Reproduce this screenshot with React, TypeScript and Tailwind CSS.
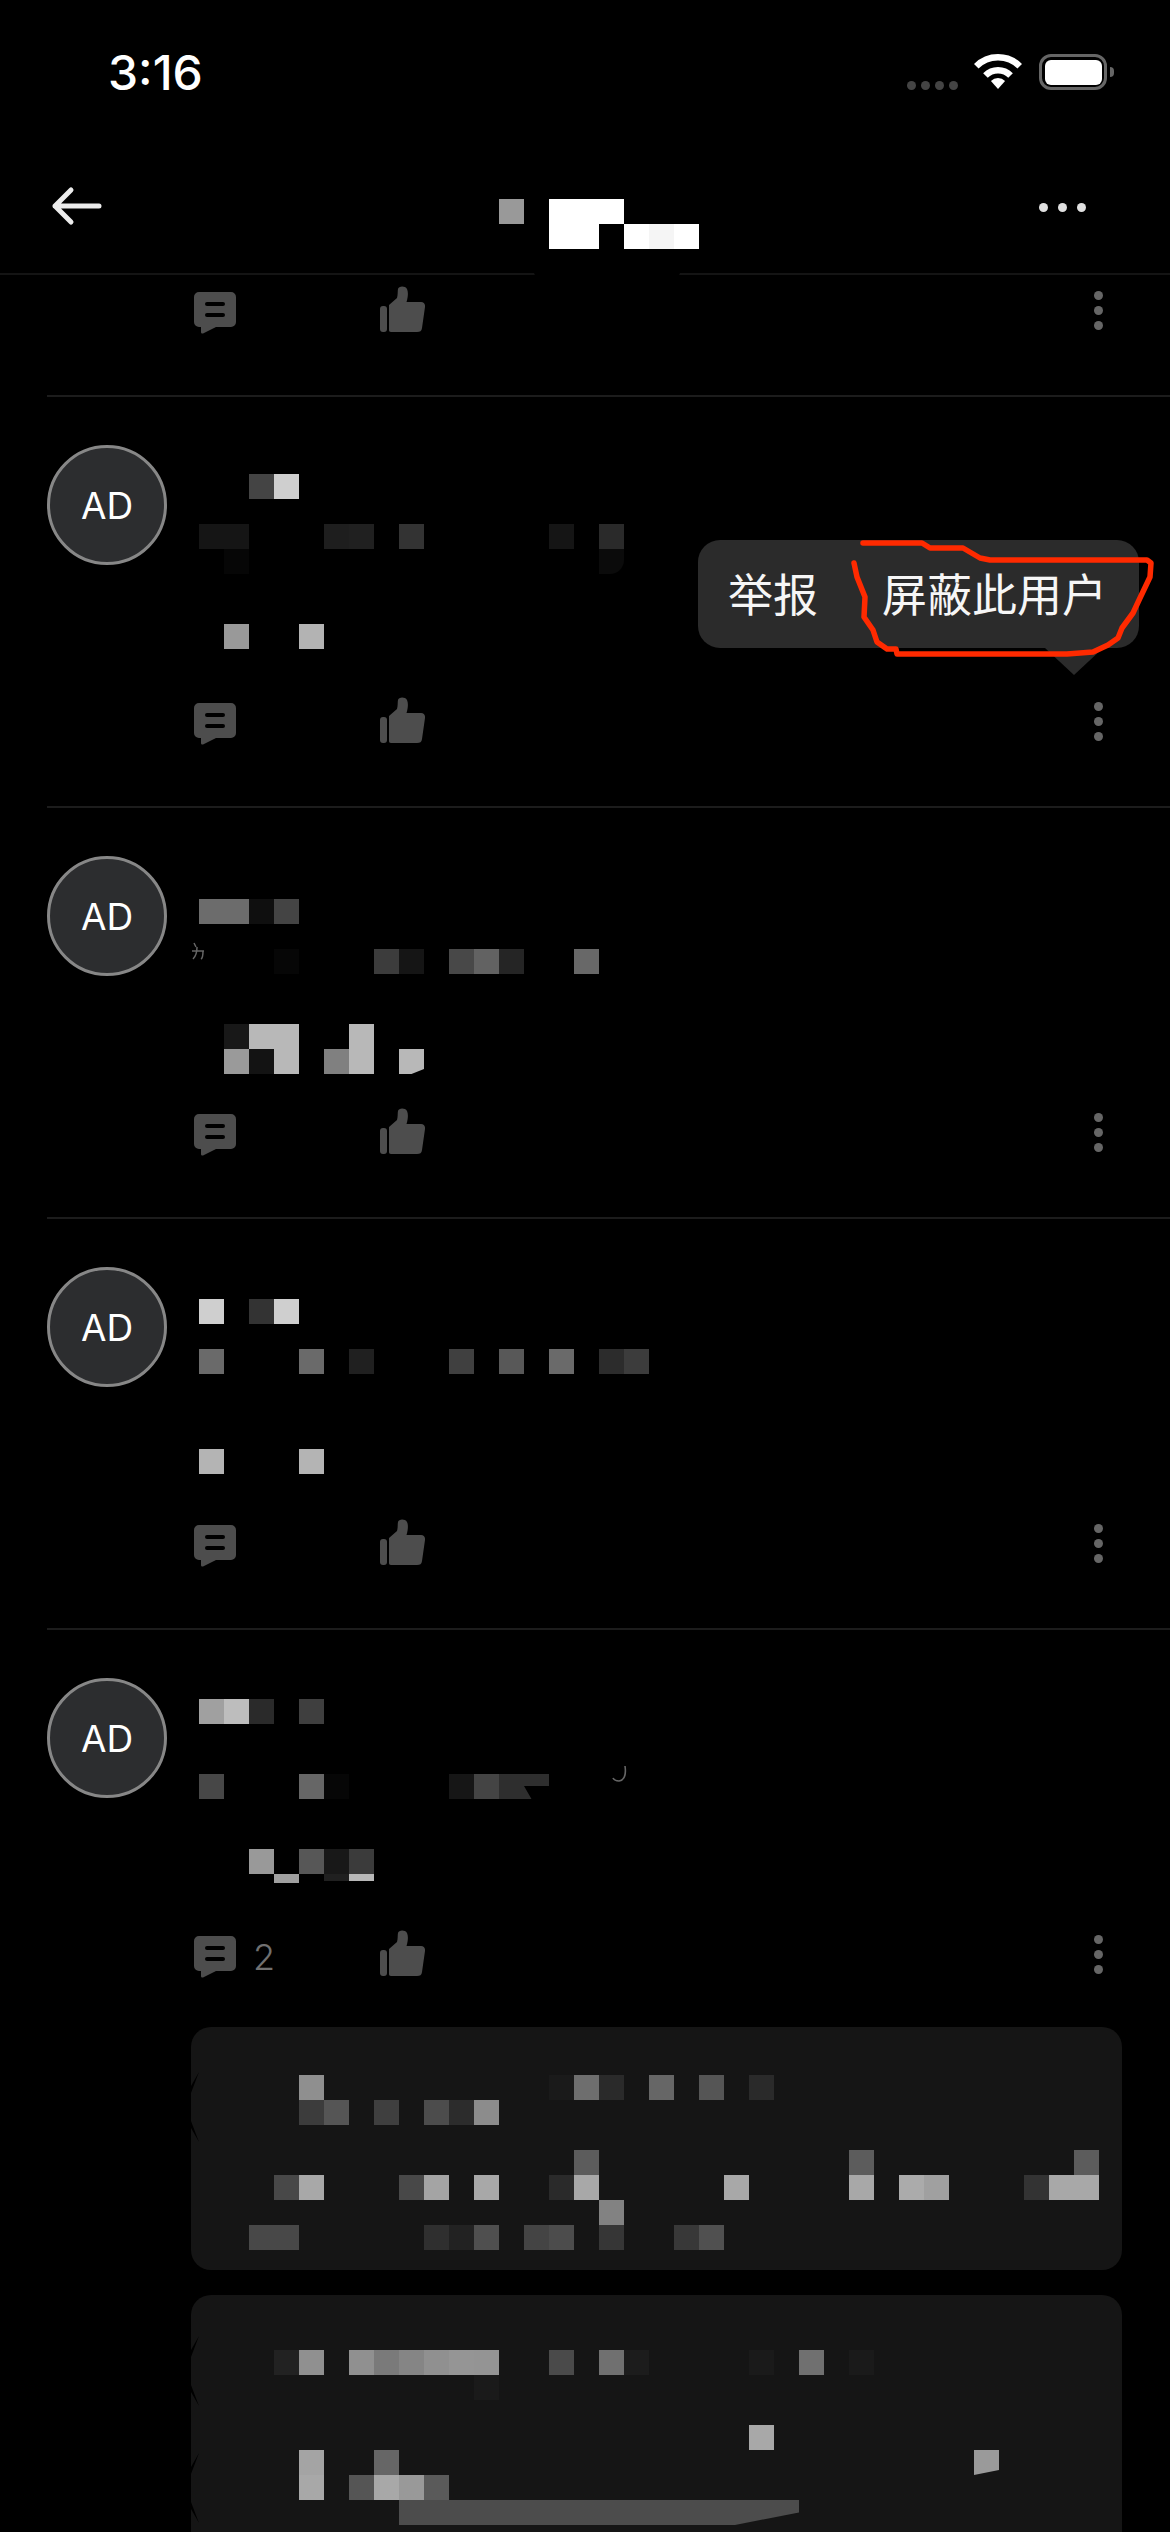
import React from "react";

type Cell = { i: number; c: string; span?: number; cls?: string };
type Row = Cell[];

const cell = (i: number, c: string, span = 1, cls = ""): Cell => ({ i, c, span, cls });

function Mosaic({ rows }: { rows: Row[] }) {
  return (
    <div className="flex flex-col">
      {rows.map((row, r) => (
        <div key={r} className="grid h-[25px] grid-cols-[repeat(37,25px)]">
          {row.map((m) => (
            <div
              key={m.i}
              className={m.cls || "h-[25px]"}
              style={{ backgroundColor: m.c, gridColumn: `${m.i + 1} / span ${m.span}` }}
            />
          ))}
        </div>
      ))}
    </div>
  );
}

function CommentIcon() {
  return (
    <svg viewBox="0 0 42 42" className="h-[42px] w-[42px] shrink-0">
      <path
        d="M5 0h32a5 5 0 0 1 5 5v25a5 5 0 0 1-5 5H22l-13 6.5c-1 .3-2-.3-2-1.5V35H5a5 5 0 0 1-5-5V5a5 5 0 0 1 5-5z"
        fill="#4d4d4d"
      />
      <rect x="11" y="10" width="20" height="4" rx="2" fill="#000" />
      <rect x="11" y="21" width="20" height="4" rx="2" fill="#000" />
    </svg>
  );
}

function ThumbIcon() {
  return (
    <svg viewBox="0 0 45 46" className="h-[46px] w-[45px] shrink-0">
      <rect x="0" y="20" width="7" height="26" rx="3" fill="#4d4d4d" />
      <path
        d="M9 19L17 12C18 9 17.5 5 18 3C18.5 0 25-.5 27 3C28.5 6 28 11 26.5 16H41C44 16 45.3 18 45 21L42 42C41.6 45 40 46 37 46H11C9.5 46 9 45 9 44Z"
        fill="#4d4d4d"
      />
    </svg>
  );
}

function Actions({ count }: { count?: number }) {
  return (
    <div className="flex h-[50px] items-start pl-[194px] pr-[67px]">
      <div className="flex w-[186px] items-center pt-[6px]">
        <CommentIcon />
        {count ? (
          <span className="ml-[17px] font-['Inter',sans-serif] text-[36px] font-light leading-[38px] text-[#707070]">
            {count}
          </span>
        ) : null}
      </div>
      <ThumbIcon />
      <div className="ml-auto flex flex-col gap-[6px] pt-[5px]">
        <span className="h-[9px] w-[9px] rounded-full bg-[#666]" />
        <span className="h-[9px] w-[9px] rounded-full bg-[#666]" />
        <span className="h-[9px] w-[9px] rounded-full bg-[#666]" />
      </div>
    </div>
  );
}

function Avatar() {
  return (
    <div className="mt-[48px] flex h-[120px] w-[120px] shrink-0 items-center justify-center rounded-full border-[3px] border-[#878787] bg-[#2c2d2f] pt-[2px] font-['Inter',sans-serif] text-[37px] font-normal text-white">
      AD
    </div>
  );
}

function Post({
  rows,
  pad,
  count,
  last,
  extra,
}: {
  rows: Row[];
  pad: string;
  count?: number;
  last?: boolean;
  extra?: React.ReactNode;
}) {
  return (
    <div className={last ? "" : "h-[411px]"}>
      <div className="ml-[47px] h-[2px] bg-[#1c1c1c]" />
      <div className="relative flex h-[300px] pl-[47px]">
        <Avatar />
        <div className={`ml-[32px] ${pad}`}>
          <Mosaic rows={rows} />
        </div>
        {extra}
      </div>
      <Actions count={count} />
    </div>
  );
}

// leftover edge of a masked avatar, sits on the card's left side
function CardNotch({ top }: { top: string }) {
  return (
    <svg viewBox="0 0 8 70" className={`absolute left-0 h-[70px] w-[8px] ${top}`}>
      <path d="M8 0L0 14V21ZM0 49V56L8 70Z" fill="#000" />
    </svg>
  );
}

function ReplyCard({ rows, pad, h, notches }: { rows: Row[]; pad: string; h: string; notches: string[] }) {
  return (
    <div className={`relative overflow-hidden rounded-[20px] bg-[#151515] pl-[8px] ${pad} ${h}`}>
      <Mosaic rows={rows} />
      {notches.map((n) => (
        <CardNotch key={n} top={n} />
      ))}
    </div>
  );
}

const post1: Row[] = [
  [cell(2, "#444444"), cell(3, "#cfcfcf")],
  [],
  [cell(0, "#151515", 2), cell(5, "#1e1e1e"), cell(6, "#202020"), cell(8, "#333333"), cell(14, "#151515"), cell(16, "#2a2a2a")],
  [cell(1, "#060606"), cell(16, "#0b0b0b", 1, "h-[25px] rounded-br-[14px]")],
  [],
  [],
  [cell(1, "#999999"), cell(4, "#b3b3b3")],
];

const post2: Row[] = [
  [cell(0, "#6c6c6c", 2), cell(2, "#0f0f0f"), cell(3, "#444444")],
  [],
  [cell(3, "#060606"), cell(7, "#3c3c3c"), cell(8, "#151515"), cell(10, "#484848"), cell(11, "#626262"), cell(12, "#252525"), cell(15, "#686868")],
  [],
  [],
  [cell(1, "#181818"), cell(2, "#b8b8b8", 2), cell(6, "#b8b8b8")],
  [
    cell(1, "#9a9a9a"),
    cell(2, "#131313"),
    cell(3, "#b8b8b8"),
    cell(5, "#808080"),
    cell(6, "#b8b8b8"),
    cell(8, "#b8b8b8", 1, "h-[25px] [clip-path:polygon(0_0,100%_0,100%_80%,50%_100%,0_100%)]"),
  ],
];

const post3: Row[] = [
  [cell(0, "#cfcfcf"), cell(2, "#333333"), cell(3, "#cfcfcf")],
  [],
  [cell(0, "#6a6a6a"), cell(4, "#6a6a6a"), cell(6, "#202020"), cell(10, "#404040"), cell(12, "#585858"), cell(14, "#6a6a6a"), cell(16, "#2c2c2c"), cell(17, "#3c3c3c")],
  [],
  [],
  [],
  [cell(0, "#b4b4b4"), cell(4, "#b4b4b4")],
];

const post4: Row[] = [
  [cell(0, "#a0a0a0"), cell(1, "#bdbdbd"), cell(2, "#2a2a2a"), cell(4, "#3f3f3f")],
  [],
  [],
  [
    cell(0, "#474747"),
    cell(4, "#666666"),
    cell(5, "#060606"),
    cell(10, "#161616"),
    cell(11, "#444444"),
    cell(12, "#2e2e2e"),
    cell(13, "#2e2e2e", 1, "h-[25px] [clip-path:polygon(0_0,100%_0,100%_48%,0_48%,30%_100%,0_100%)]"),
  ],
  [],
  [],
  [cell(2, "#999999"), cell(4, "#575757"), cell(5, "#181818"), cell(6, "#3b3b3b")],
  [
    cell(3, "#a0a0a0", 1, "h-[9px]"),
    cell(5, "#202020", 1, "h-[7px]"),
    cell(6, "#b8b8b8", 1, "h-[7px]"),
  ],
];

const reply1: Row[] = [
  [cell(4, "#8f8f8f"), cell(14, "#1a1a1a"), cell(15, "#6e6e6e"), cell(16, "#2a2a2a"), cell(18, "#666666"), cell(20, "#555555"), cell(22, "#2a2a2a")],
  [cell(4, "#3c3c3c"), cell(5, "#555555"), cell(7, "#3f3f3f"), cell(9, "#4c4c4c"), cell(10, "#2c2c2c"), cell(11, "#8c8c8c")],
  [],
  [cell(15, "#5c5c5c"), cell(26, "#5c5c5c"), cell(35, "#5c5c5c")],
  [
    cell(3, "#484848"),
    cell(4, "#a8a8a8"),
    cell(8, "#484848"),
    cell(9, "#a4a4a4"),
    cell(11, "#a8a8a8"),
    cell(14, "#2a2a2a"),
    cell(15, "#a8a8a8"),
    cell(21, "#a8a8a8"),
    cell(26, "#a8a8a8"),
    cell(28, "#ababab"),
    cell(29, "#a0a0a0"),
    cell(33, "#333333"),
    cell(34, "#a8a8a8", 2),
  ],
  [cell(16, "#828282")],
  [cell(2, "#484848", 2), cell(9, "#2f2f2f"), cell(10, "#222222"), cell(11, "#4f4f4f"), cell(13, "#444444"), cell(14, "#4c4c4c"), cell(16, "#363636"), cell(19, "#383838"), cell(20, "#505050")],
];

const reply2: Row[] = [
  [
    cell(3, "#222222"),
    cell(4, "#909090"),
    cell(6, "#909090"),
    cell(7, "#7a7a7a"),
    cell(8, "#858585"),
    cell(9, "#909090"),
    cell(10, "#959595"),
    cell(11, "#949494"),
    cell(14, "#4a4a4a"),
    cell(16, "#707070"),
    cell(17, "#1c1c1c"),
    cell(22, "#1a1a1a"),
    cell(24, "#707070"),
    cell(26, "#1a1a1a"),
  ],
  [cell(11, "#1a1a1a")],
  [],
  [cell(22, "#a8a8a8")],
  [
    cell(4, "#a4a4a4"),
    cell(7, "#666666"),
    cell(31, "#9a9a9a", 1, "h-[25px] [clip-path:polygon(0_0,100%_0,100%_80%,0_100%)]"),
  ],
  [cell(4, "#a8a8a8"), cell(6, "#555555"), cell(7, "#a8a8a8"), cell(8, "#999999"), cell(9, "#5a5a5a")],
  [cell(8, "#4c4c4c", 16, "h-[25px] [clip-path:polygon(0_0,100%_0,100%_50%,84%_100%,0_100%)]")],
];

const title: Row[] = [
  [cell(0, "#999999"), cell(2, "#ffffff", 3)],
  [cell(2, "#ffffff", 2), cell(5, "#ffffff"), cell(6, "#f5f5f5"), cell(7, "#ffffff")],
];

function StatusBar() {
  return (
    <div className="flex h-[150px] items-start justify-between pl-[108px] pr-[56px] pt-[46px]">
      <span className="font-['Inter',sans-serif] text-[48px] font-medium leading-[54px] text-white">3:16</span>
      <div className="flex items-start pt-[8px]">
        <div className="mr-[16px] mt-[27px] flex gap-[5px]">
          <span className="h-[9px] w-[9px] rounded-full bg-[#444]" />
          <span className="h-[9px] w-[9px] rounded-full bg-[#444]" />
          <span className="h-[9px] w-[9px] rounded-full bg-[#444]" />
          <span className="h-[9px] w-[9px] rounded-full bg-[#444]" />
        </div>
        <svg viewBox="0 0 48 36" className="h-[36px] w-[48px]">
          <path d="M2.26 12.26A30.75 30.75 0 0 1 45.74 12.26" fill="none" stroke="#fff" strokeWidth="6.5" />
          <path d="M11.45 21.45A17.75 17.75 0 0 1 36.55 21.45" fill="none" stroke="#fff" strokeWidth="6.5" />
          <path d="M24 35L16.93 26.93A10 10 0 0 1 31.07 26.93Z" fill="#fff" />
        </svg>
        <div className="ml-[17px] flex items-center">
          <div className="flex h-[36px] w-[68px] items-center justify-center rounded-[12px] border-[3px] border-[#666]">
            <div className="h-[25px] w-[57px] rounded-[6px] bg-white" />
          </div>
          <div className="ml-[3px] h-[10px] w-[4px] rounded-r-full bg-[#666]" />
        </div>
      </div>
    </div>
  );
}

function NavBar() {
  return (
    <div className="relative flex h-[125px] items-start border-b-2 border-[#141414] pl-[50px] pr-[84px]">
      <svg viewBox="0 0 52 42" className="mt-[35px] h-[42px] w-[52px] shrink-0">
        <path
          d="M5 21H49M5 21L21 5M5 21L21 37"
          fill="none"
          stroke="#ececec"
          strokeWidth="5"
          strokeLinecap="round"
          strokeLinejoin="round"
        />
      </svg>
      <div className="ml-[397px] mt-[49px] w-[200px] shrink-0">
        <Mosaic rows={title} />
      </div>
      <div className="ml-auto mt-[53px] flex gap-[10px]">
        <span className="h-[9px] w-[9px] rounded-full bg-[#e0e0e0]" />
        <span className="h-[9px] w-[9px] rounded-full bg-[#e0e0e0]" />
        <span className="h-[9px] w-[9px] rounded-full bg-[#e0e0e0]" />
      </div>
      <span className="absolute bottom-[-3px] left-[534px] h-[4px] w-[146px] rounded-b-[6px] bg-black" />
    </div>
  );
}

function Popup() {
  return (
    <>
      <div className="absolute left-[698px] top-[540px] flex h-[108px] w-[441px] items-center rounded-[22px] bg-[#2b2b2b] pb-[4px] pl-[30px] font-['Noto_Sans_CJK_SC',sans-serif] text-[45px] font-normal leading-none text-[#f6f6f6]">
        <span>举报</span>
        <span className="ml-[64px]">屏蔽此用户</span>
      </div>
      <svg viewBox="0 0 1170 700" className="pointer-events-none absolute left-0 top-0 h-[700px] w-[1170px]">
        <path d="M1045 648H1103L1074 675Z" fill="#2b2b2b" />
        <path
          d="M863 543L922 543L930 548L963 548L980 558L990 560L1147 560L1151 563L1150 577L1140 598L1133 613L1122 628L1118 638L1108 645L1093 652L1067 654L897 654L896 649L887 649L877 642L873 630L864 617L865 597L857 577L854 563"
          fill="none"
          stroke="#ff2a00"
          strokeWidth="5.5"
          strokeLinecap="round"
          strokeLinejoin="round"
        />
      </svg>
    </>
  );
}

export default function App() {
  return (
    <div className="relative h-[2532px] w-[1170px] overflow-hidden bg-black">
      <StatusBar />
      <NavBar />
      <div className="h-[120px]">
        <div className="pt-[11px]">
          <Actions />
        </div>
      </div>
      <Post rows={post1} pad="pt-[77px]" />
      <Post
        rows={post2}
        pad="pt-[91px]"
        extra={
          <svg viewBox="0 0 14 18" className="absolute left-[191px] top-[134px] h-[18px] w-[14px]">
            <path d="M3 1L5 5M1 9H13M6 5C6 10 5 14 2 17M12 9C12 13 12 16 10 17" fill="none" stroke="#666" strokeWidth="1.5" />
          </svg>
        }
      />
      <Post rows={post3} pad="pt-[80px]" />
      <Post
        rows={post4}
        pad="pt-[69px]"
        count={2}
        last
        extra={
          <svg viewBox="0 0 16 18" className="absolute left-[611px] top-[135px] h-[18px] w-[16px]">
            <path d="M14 1C15 8 14 15 8 16C5 16 3 15 2 13" fill="none" stroke="#666" strokeWidth="1.6" />
          </svg>
        }
      />
      <div className="ml-[191px] mt-[47px] flex w-[931px] flex-col gap-[25px]">
        <ReplyCard rows={reply1} pad="pt-[48px]" h="h-[243px]" notches={["top-[45px]"]} />
        <ReplyCard rows={reply2} pad="pt-[55px]" h="h-[300px]" notches={["top-[41px]", "top-[158px]"]} />
      </div>
      <Popup />
    </div>
  );
}
